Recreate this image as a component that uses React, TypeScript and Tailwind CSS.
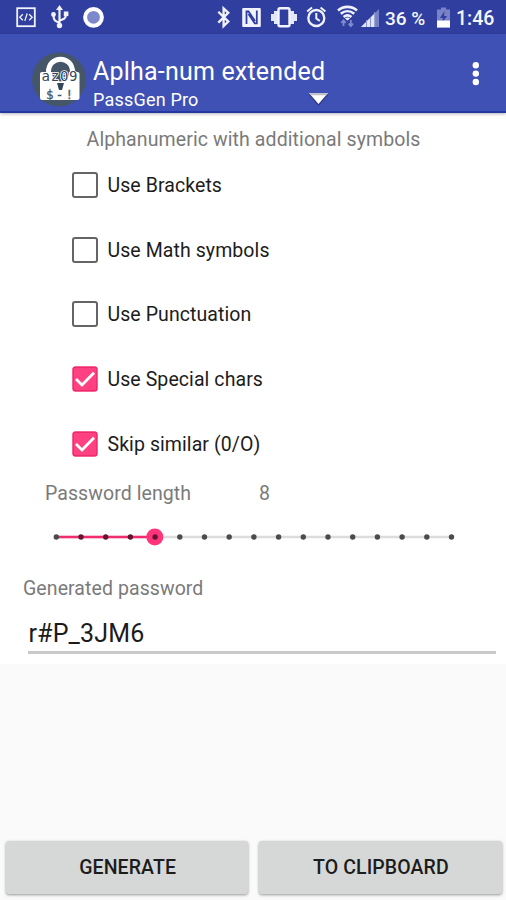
import React from "react";

function LeftStatusIcons() {
  return (
    <svg width="120" height="34" viewBox="0 0 120 34" fill="none" stroke="#f1f3fc">
      <rect x="17.2" y="8.2" width="17.6" height="18" strokeWidth="1.8" />
      <path d="M22.8 14.2l-3 3 3 3M29.2 14.2l3 3-3 3M27.2 13.5l-2.4 7.4" strokeWidth="1.3" />
      <path d="M59.5 8v17M59.5 22.500c-4-1-6-2-6-7M59.500 20.500c4-1 6.500-2 6.500-6" strokeWidth="2.2" />
      <path d="M59.500 5l3.500 5h-7z" fill="#f1f3fc" stroke="none" />
      <circle cx="53.500" cy="14.500" r="2.400" fill="#f1f3fc" stroke="none" />
      <rect x="63.800" y="11.500" width="4.600" height="4.600" fill="#f1f3fc" stroke="none" />
      <circle cx="59.500" cy="25.500" r="2.700" fill="#f1f3fc" stroke="none" />
      <circle cx="93.500" cy="17.300" r="8.400" fill="#7d87cb" strokeWidth="4" stroke="#ffffff" />
    </svg>
  );
}

function RightStatusIcons() {
  return (
    <svg width="174" height="34" viewBox="208 0 174 34" fill="none" stroke="#f1f3fc">
      <path d="M218.300 11.800l10 9.800-4.700 4.400V8.400l4.700 4.400-10 9.800" strokeWidth="2.300" />
      <rect x="242.200" y="8" width="18.600" height="19" rx="1" fill="#f1f3fc" stroke="none" />
      <path d="M246.500 24V11.500h2l6.500 9.500M256.800 10.500v12.800h-2l-6.300-9.300" strokeWidth="1.800" stroke="#303f9f" />
      <path d="M271 14h3v-3h4v13h-4v-3h-3zM297 14h-3v-3h-4v13h4v-3h3z" fill="#e3e6f6" stroke="none" />
      <rect x="278.500" y="8.200" width="11" height="18" rx="1.500" strokeWidth="2.400" fill="#303f9f" />
      <circle cx="316.300" cy="18" r="8" strokeWidth="2.300" />
      <path d="M316.300 13v5.500l3.500 2.300M307.200 11.600l4.800-4M325.400 11.600l-4.800-4" strokeWidth="2" />
      <path d="M338 10.500c5.500-4.800 13.500-4.800 19 0M340.800 13.800c4-3.400 9.400-3.400 13.400 0M343.600 16.900c2.400-1.900 5.400-1.900 7.800 0" strokeWidth="2.600" />
      <path d="M345 18.500c1.500-1.200 3.500-1.200 5 0l-2.500 2z" fill="#f1f3fc" stroke="none" />
      <path d="M343.500 20.500v5.500M341.300 22.800l2.200-2.500 2.200 2.500M350.800 20v6M348.600 23.700l2.200 2.500 2.200-2.500" stroke="#7f8bcc" strokeWidth="1.800" />
      <path d="M361 27L379 9v18z" fill="#7682c6" stroke="none" />
      <path d="M361 27L375 13v14z" fill="#e1e5f5" stroke="none" />
      <path d="M366.500 20v7M370.500 17v10M374.700 12v15" stroke="#8d98d0" strokeWidth="1" />
    </svg>
  );
}

function StatusBar() {
  return (
    <div className="flex h-[34px] shrink-0 items-center bg-[#303f9f] font-medium text-[#f4f5fd]">
      <LeftStatusIcons />
      <div className="w-[88px]" />
      <RightStatusIcons />
      <span className="ml-[3px] w-[51px] pt-[3px] text-[19px] leading-[34px] whitespace-nowrap">36 %</span>
      <svg width="15" height="34" viewBox="0 0 15 34">
        <path d="M5 7.500h5v2h4v18H1v-18h4z" fill="#7882c4" />
        <path d="M8.500 11L4 18h3l-1 5 5-7H8z" fill="#303f9f" />
        <path d="M1 20.500h13v7H1z" fill="#ffffff" />
      </svg>
      <span className="ml-[5px] pt-[4px] text-[19.5px] leading-[34px]">1:46</span>
    </div>
  );
}

function LockLogo() {
  return (
    <svg className="shrink-0" width="56" height="56" viewBox="0 0 56 56">
      <circle cx="28" cy="27.500" r="27" fill="#465669" />
      <path d="M17.500 25v-5c0-17 24-17 24 0V25" fill="none" stroke="#fff" strokeWidth="5" />
      <rect x="9" y="20" width="39.500" height="28" rx="2" fill="#fff" />
      <circle cx="29.500" cy="21" r="8.500" fill="#465669" />
      <path d="M26 31h7l-2 7h-3z" fill="#34465a" />
      <text x="28.500" y="28.500" textAnchor="middle" fontFamily="DejaVu Sans Mono" fontSize="14" textLength="36" fill="#34465a" stroke="#fff" strokeWidth="1.600" paintOrder="stroke">az09</text>
      <text x="28.500" y="46.500" textAnchor="middle" fontFamily="DejaVu Sans Mono" fontSize="12.500" textLength="27" fill="#465669" stroke="#465669" strokeWidth=".3">$-!</text>
    </svg>
  );
}

function AppBar() {
  return (
    <header className="z-10 flex h-[79px] shrink-0 border-b-2 border-[#2438a4] bg-[#3f51b5] pl-[31px] text-white shadow-[0_1px_3px_rgba(0,0,0,0.3)]">
      <div className="pt-[18px]"><LockLogo /></div>
      <div className="ml-[6px] w-[236px] pt-[23px] whitespace-nowrap">
        <div className="text-[25px] leading-[29px] tracking-[0.2px]">Aplha-num extended</div>
        <div className="flex items-center justify-between">
          <span className="text-[18px] leading-[27px] tracking-[0.2px]">PassGen Pro</span>
          <svg width="21" height="16" viewBox="0 0 21 16">
            <path d="M.5 2.500h20L10.500 14z" fill="#303a86" />
            <path d="M1 1h19l-9.500 11z" fill="#fff" />
            <path d="M1 1h19l-2 2.300H3z" fill="#bfc0c9" />
          </svg>
        </div>
      </div>
      <svg className="ml-[138px] mt-[26px]" width="16" height="30" viewBox="0 0 16 30" fill="#fff">
        <circle cx="8.800" cy="5.200" r="3.200" /><circle cx="8.800" cy="13.600" r="3.200" /><circle cx="8.800" cy="22" r="3.200" />
      </svg>
    </header>
  );
}

function CheckRow({ label, checked }: { label: string; checked: boolean }) {
  return (
    <label className="flex h-[64.7px] items-center gap-[9.5px] pl-[72px]">
      {checked ? (
        <svg width="26" height="26" viewBox="0 0 26 26">
          <rect x=".5" y=".5" width="25" height="25" rx="2.500" fill="#ff4081" />
          <rect x="1.200" y="1.200" width="23.600" height="23.600" rx="2" fill="none" stroke="#ed2c6d" strokeWidth="1.400" />
          <path d="M4 13l6 6L22 6.700" fill="none" stroke="#fff" strokeWidth="2.800" />
        </svg>
      ) : (
        <span className="size-[26px] rounded-[3px] border-[2.5px] border-[#656565]" />
      )}
      <span className="pt-[2.5px] text-[19.5px] leading-6 tracking-[0.08px] text-[#1c1c1c]">{label}</span>
    </label>
  );
}

function LengthSlider() {
  const stops = Array.from({ length: 17 }, (_, i) => 6 + i * 24.7);
  return (
    <svg className="ml-[50px]" width="408" height="20" viewBox="0 0 408 20">
      <path d="M6 10h395" stroke="#dcdcdc" strokeWidth="2.500" />
      <path d="M6 10h99" stroke="#f32b70" strokeWidth="2.500" />
      <circle cx="104.800" cy="10" r="8.500" fill="#ff347b" />
      {stops.map((x, i) => (
        <circle key={x} cx={x + 0.3} cy="10" r="2.700" fill={i > 0 && i < 5 ? "#63152f" : "#4b4b4b"} />
      ))}
    </svg>
  );
}

function ActionButton({ children }: { children: React.ReactNode }) {
  return (
    <button className="h-[53px] flex-1 rounded-[3px] bg-[#d6d8d7] pt-[1px] pl-[1px] text-[19.5px] font-medium tracking-[0.1px] text-[#1c1c1c] shadow-[0_1px_3px_rgba(0,0,0,0.4)]">
      {children}
    </button>
  );
}

export default function App() {
  return (
    <div className="flex h-[900px] w-[506px] flex-col overflow-hidden bg-[#fafafa] font-['Roboto',sans-serif]">
      <StatusBar />
      <AppBar />
      <main className="flex h-[551px] shrink-0 flex-col bg-white">
        <p className="mt-[15px] ml-[1px] h-6 text-center text-[19.5px] leading-6 tracking-[0.1px] text-[#7a7a7a]">Alphanumeric with additional symbols</p>
        <div className="mt-[0.5px]">
          <CheckRow label="Use Brackets" checked={false} />
          <CheckRow label="Use Math symbols" checked={false} />
          <CheckRow label="Use Punctuation" checked={false} />
          <CheckRow label="Use Special chars" checked />
          <CheckRow label="Skip similar (0/O)" checked />
        </div>
        <div className="mt-[6px] flex h-6 pl-[45px] text-[19.5px] leading-6 tracking-[0.08px] text-[#7a7a7a]">
          <span className="w-[214px]">Password length</span><span>8</span>
        </div>
        <div className="mt-[21px] h-5"><LengthSlider /></div>
        <p className="mt-[30px] pl-[23px] text-[19.5px] leading-6 tracking-[0.08px] text-[#7a7a7a]">Generated password</p>
        <div className="mt-[11px] ml-[28px] h-[42px] w-[468px] border-b-[3px] border-[#c9c9c9] pl-[0.5px] text-[25px] leading-[44px] tracking-[0.15px] text-[#1c1c1c]">r#P_3JM6</div>
      </main>
      <footer className="mt-auto flex gap-[11px] pr-[4.5px] pb-[6px] pl-[6px]">
        <ActionButton>GENERATE</ActionButton>
        <ActionButton>TO CLIPBOARD</ActionButton>
      </footer>
    </div>
  );
}
